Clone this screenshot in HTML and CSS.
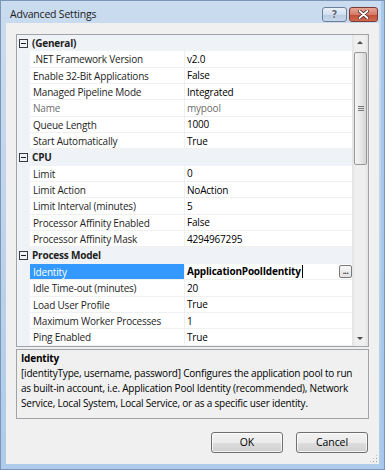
FILE: index.html
```html
<!DOCTYPE html>
<html lang="en">
<head>
  <meta charset="UTF-8">
  <title>Advanced Settings</title>
  <link rel="stylesheet" href="styles.css">
</head>
<body>
  <div class="window">
    <div class="titlebar">
      <span class="title">Advanced Settings</span>
      <div class="caption-btns">
        <div class="cap help">?</div>
        <div class="cap close">
          <svg width="11" height="9" viewBox="0 0 11 9"><path d="M1.5 1 L9.5 8 M9.5 1 L1.5 8" stroke="#4a2020" stroke-width="3.4" stroke-linecap="round"/><path d="M1.5 1 L9.5 8 M9.5 1 L1.5 8" stroke="#fff" stroke-width="1.8" stroke-linecap="round"/></svg>
        </div>
      </div>
    </div>

    <div class="client">
      <div class="grid">
        <div class="rows">
          <div class="row cat"><span class="gutter"><i class="toggle"></i></span><span class="name">(General)</span><span class="value"></span></div>
          <div class="row"><span class="gutter"></span><span class="name">.NET Framework Version</span><span class="value">v2.0</span></div>
          <div class="row"><span class="gutter"></span><span class="name">Enable 32-Bit Applications</span><span class="value">False</span></div>
          <div class="row"><span class="gutter"></span><span class="name">Managed Pipeline Mode</span><span class="value">Integrated</span></div>
          <div class="row readonly"><span class="gutter"></span><span class="name">Name</span><span class="value">mypool</span></div>
          <div class="row"><span class="gutter"></span><span class="name">Queue Length</span><span class="value">1000</span></div>
          <div class="row"><span class="gutter"></span><span class="name">Start Automatically</span><span class="value">True</span></div>
          <div class="row cat"><span class="gutter"><i class="toggle"></i></span><span class="name">CPU</span><span class="value"></span></div>
          <div class="row"><span class="gutter"></span><span class="name">Limit</span><span class="value">0</span></div>
          <div class="row"><span class="gutter"></span><span class="name">Limit Action</span><span class="value">NoAction</span></div>
          <div class="row"><span class="gutter"></span><span class="name">Limit Interval (minutes)</span><span class="value">5</span></div>
          <div class="row"><span class="gutter"></span><span class="name">Processor Affinity Enabled</span><span class="value">False</span></div>
          <div class="row"><span class="gutter"></span><span class="name">Processor Affinity Mask</span><span class="value">4294967295</span></div>
          <div class="row cat"><span class="gutter"><i class="toggle"></i></span><span class="name">Process Model</span><span class="value"></span></div>
          <div class="row selected"><span class="gutter"></span><span class="name">Identity</span><span class="value"><b>ApplicationPoolIdentity</b><i class="caret"></i><span class="ellipsis">...</span></span></div>
          <div class="row"><span class="gutter"></span><span class="name">Idle Time-out (minutes)</span><span class="value">20</span></div>
          <div class="row"><span class="gutter"></span><span class="name">Load User Profile</span><span class="value">True</span></div>
          <div class="row"><span class="gutter"></span><span class="name">Maximum Worker Processes</span><span class="value">1</span></div>
          <div class="row"><span class="gutter"></span><span class="name">Ping Enabled</span><span class="value">True</span></div>
        </div>
        <div class="scrollbar">
          <div class="arrow up"></div>
          <div class="track">
            <div class="thumb"><i class="grip"></i></div>
          </div>
          <div class="arrow down"></div>
        </div>
      </div>

      <div class="desc">
        <div class="desc-title">Identity</div>
        <div class="desc-text">[identityType, username, password] Configures the application pool to run as built-in account, i.e. Application Pool Identity (recommended), Network Service, Local System, Local Service, or as a specific user identity.</div>
      </div>

      <div class="actions">
        <button class="btn">OK</button>
        <button class="btn">Cancel</button>
      </div>

      <div class="sizegrip"></div>
    </div>
  </div>
</body>
</html>
```

FILE: styles.css
```css
body {
  margin: 0;
  font-family: "Open Sans", "Noto Sans", sans-serif;
  font-size: 10px;
  letter-spacing: -0.2px;
  color: #000;
}
.window {
  width: 385px;
  height: 470px;
  box-sizing: border-box;
  padding: 0 6px 6px 6px;
  background: linear-gradient(to bottom, #cadcef 0%, #bfd5ec 40%, #aecbe9 100%);
  box-shadow: inset 0 0 0 1px #7b96b8, inset -4px 0 0 #a6c8ec;
}
.titlebar {
  height: 23px;
  display: flex;
  justify-content: space-between;
  padding-left: 4px;
}
.title {
  font-size: 10.5px;
  letter-spacing: -0.2px;
  line-height: 28px;
  color: #1a1a1a;
}
.caption-btns {
  display: flex;
  gap: 2px;
  padding-top: 7px;
  margin-right: 1px;
}
.cap {
  height: 15px;
  border: 1px solid #6d7f98;
  border-radius: 3px;
  box-sizing: border-box;
  display: flex;
  align-items: center;
  justify-content: center;
}
.help {
  width: 25px;
  background: linear-gradient(to bottom, #e9f0f8 0%, #d3dfee 50%, #b9cbe2 51%, #c9d9ec 100%);
  color: #5b6678;
  font-family: "DejaVu Sans", sans-serif;
  font-weight: bold;
  font-size: 10px;
  letter-spacing: 0;
  text-shadow: 0 0 1px #fff, 0 0 1px #fff;
}
.close {
  width: 29px;
  border-color: #7a3a34;
  background: linear-gradient(to bottom, #e8a493 0%, #d47c69 50%, #c24a35 51%, #d26a4e 100%);
}
.client {
  position: relative;
  background: #f0f0f0;
  height: 441px;
  box-sizing: border-box;
  padding: 11px 10px 0 10px;
}
.grid {
  display: flex;
  border: 1px solid #a0a4a9;
  background: #fff;
}
.rows {
  flex: 1;
}
.row {
  display: grid;
  grid-template-columns: 13px 155px 1fr;
  height: 16.35px;
  line-height: 16px;
  white-space: nowrap;
}
.gutter {
  background: #eff2f7;
}
.name {
  padding-left: 3px;
  border-right: 1px solid #f0f0f0;
  border-bottom: 1px solid #f0f0f0;
  overflow: hidden;
  color: #1e1e1e;
}
.value {
  padding-left: 2px;
  border-bottom: 1px solid #f0f0f0;
  display: flex;
  align-items: center;
  overflow: hidden;
}
.row.cat {
  background: #eff2f7;
  font-weight: bold;
}
.row.cat .name {
  padding-left: 2px;
  border-color: transparent;
}
.row.cat .value {
  border-color: transparent;
}
.row.cat .gutter {
  display: flex;
  align-items: center;
}
.toggle {
  width: 7px;
  height: 7px;
  margin-left: 2px;
  border: 1px solid #3b3b3b;
  position: relative;
}
.toggle::after {
  content: "";
  position: absolute;
  left: 1px;
  top: 3px;
  width: 5px;
  height: 1px;
  background: #1e1e1e;
}
.row.readonly .name,
.row.readonly .value {
  color: #6d6d6d;
}
.row.selected .name {
  background: #3399ff;
  color: #fff;
}
.caret {
  width: 1px;
  height: 13px;
  background: #000;
  margin-left: 1px;
}
.ellipsis {
  margin-left: auto;
  width: 13px;
  height: 13px;
  box-sizing: border-box;
  border: 1px solid #7a7a7a;
  border-radius: 2px;
  background: linear-gradient(to bottom, #f7f7f7, #e2e2e2);
  font-size: 8px;
  line-height: 9px;
  text-align: center;
  letter-spacing: -0.5px;
  font-weight: bold;
  color: #333;
}
.scrollbar {
  width: 16px;
  display: flex;
  flex-direction: column;
  background: linear-gradient(to right, #e2e2e2 0%, #efefef 20%, #efefef 80%, #e2e2e2 100%);
}
.arrow {
  height: 16px;
  position: relative;
}
.arrow::after {
  content: "";
  position: absolute;
  left: 5px;
  border-left: 3px solid transparent;
  border-right: 3px solid transparent;
}
.arrow.up::after {
  top: 6px;
  border-bottom: 3px solid #4a4a4a;
}
.arrow.down::after {
  top: 7px;
  border-top: 3px solid #4a4a4a;
}
.track {
  flex: 1;
  padding: 1px 1px 0 2px;
}
.thumb {
  height: 113px;
  border: 1px solid #979797;
  border-radius: 2px;
  box-sizing: border-box;
  background: linear-gradient(to right, #f5f5f5 0%, #e8e8e8 50%, #d6d6d6 100%);
  display: flex;
  align-items: center;
  justify-content: center;
}
.grip {
  width: 6px;
  height: 5px;
  background: repeating-linear-gradient(to bottom, #777 0, #777 1px, transparent 1px, transparent 2px);
}
.desc {
  margin-top: 2px;
  height: 70px;
  box-sizing: border-box;
  border: 1px solid #a0a4a9;
  padding: 1px 4px 0 4px;
  line-height: 15.3px;
}
.desc-title {
  font-weight: bold;
}
.actions {
  display: flex;
  justify-content: flex-end;
  gap: 13px;
  margin-top: 13px;
  padding-right: 1px;
}
.btn {
  width: 72px;
  height: 21px;
  font-family: inherit;
  font-size: 10.5px;
  letter-spacing: -0.1px;
  color: #000;
  border: 1px solid #707070;
  border-radius: 3px;
  background: linear-gradient(to bottom, #f2f2f2 0%, #ebebeb 50%, #dddddd 51%, #cfcfcf 100%);
  box-shadow: inset 0 0 0 1px rgba(255, 255, 255, 0.7);
  padding: 0;
}
.sizegrip {
  position: absolute;
  right: 1px;
  bottom: 1px;
  width: 9px;
  height: 9px;
  background: radial-gradient(circle, #9a9a9a 0.8px, transparent 1px) 0 0 / 3px 3px;
  clip-path: polygon(100% 0, 100% 100%, 0 100%);
}
```
